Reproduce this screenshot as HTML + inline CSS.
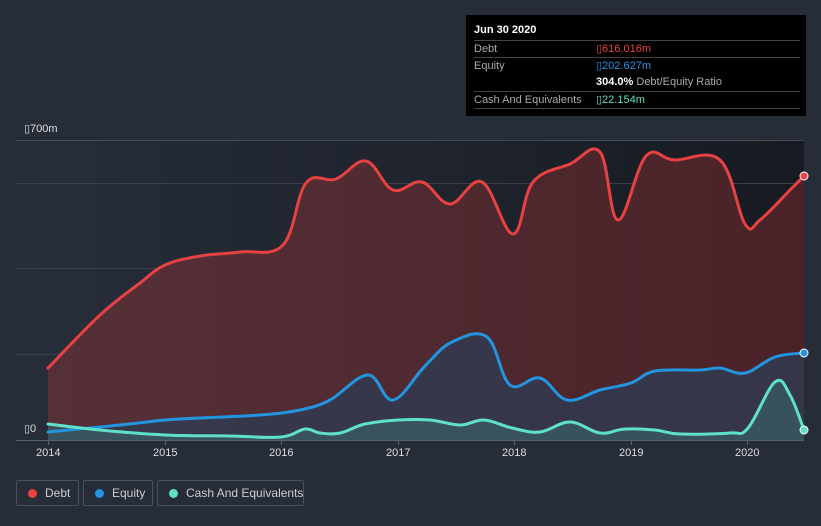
<!DOCTYPE html>
<html><head><meta charset="utf-8"><style>
html,body{margin:0;width:821px;height:526px;overflow:hidden}
body{background:#262d39;font-family:"Liberation Sans",sans-serif;position:relative}
.tt{position:absolute;left:466px;top:15px;width:340px;height:101px;background:#000;color:#fff;font-size:11px}
.tt .r{position:absolute;left:8px;right:6px;border-top:1px solid #444;height:17px;line-height:17px;color:#aaa}
.tt .v{position:absolute;left:122px}
.leg{position:absolute;top:480px;height:26px;border:1px solid #4a515c;border-radius:2px;color:#ccc;font-size:12px;line-height:25px;box-sizing:border-box;white-space:nowrap}
.leg i{position:absolute;left:11px;top:8px;width:9px;height:9px;border-radius:50%}
.ax{position:absolute;color:#ddd;font-size:11px}
</style></head><body>
<svg width="821" height="526" style="position:absolute;left:0;top:0">
<defs>
<linearGradient id="bg" x1="0" x2="1" y1="0" y2="0"><stop offset="0" stop-color="#272e3a"/><stop offset="1" stop-color="#171a21"/></linearGradient>
<linearGradient id="dg" x1="0" x2="1"><stop offset="0" stop-color="#553137"/><stop offset="1" stop-color="#4a2228"/></linearGradient>
</defs>
<rect x="16" y="140" width="788" height="300" fill="url(#bg)"/>
<g stroke-width="1"><line x1="16" x2="804" y1="140.5" y2="140.5" stroke="#454b57"/><line x1="16" x2="804" y1="183.5" y2="183.5" stroke="#3a3f4a"/><line x1="16" x2="804" y1="268.5" y2="268.5" stroke="#3a3f4a"/><line x1="16" x2="804" y1="354.5" y2="354.5" stroke="#3a3f4a"/></g>
<path id="df" fill="url(#dg)"/>
<path id="ef" fill="#323a50" opacity="0.85"/>
<path id="cf" fill="#3a5a60" opacity="0.8"/>
<g fill="none" stroke-width="3" stroke-linejoin="round" stroke-linecap="round">
<path id="dl" stroke="#e84142"/>
<path id="el" stroke="#2394df"/>
<path id="cl" stroke="#5fe0c8"/>
</g>
<circle cx="804" cy="176" r="4" fill="#e84142" stroke="#fff" stroke-width="1"/>
<circle cx="804" cy="353" r="4" fill="#2394df" stroke="#fff" stroke-width="1"/>
<circle cx="804" cy="430" r="4" fill="#5fe0c8" stroke="#fff" stroke-width="1"/>
<line x1="16" x2="804" y1="440.5" y2="440.5" stroke="#5a606b"/>
<g stroke="#5a606b"><line x1="48.5" x2="48.5" y1="440" y2="445"/><line x1="165.5" x2="165.5" y1="440" y2="445"/><line x1="281.5" x2="281.5" y1="440" y2="445"/><line x1="398.5" x2="398.5" y1="440" y2="445"/><line x1="514.5" x2="514.5" y1="440" y2="445"/><line x1="631.5" x2="631.5" y1="440" y2="445"/><line x1="747.5" x2="747.5" y1="440" y2="445"/></g>
</svg>
<div class="ax" style="left:24px;top:122px">▯700m</div>
<div class="ax" style="left:24px;top:422px">▯0</div>
<div class="ax" style="left:36px;top:447px">2014</div>
<div class="ax" style="left:153px;top:447px">2015</div>
<div class="ax" style="left:269px;top:447px">2016</div>
<div class="ax" style="left:386px;top:447px">2017</div>
<div class="ax" style="left:502px;top:447px">2018</div>
<div class="ax" style="left:619px;top:447px">2019</div>
<div class="ax" style="left:735px;top:447px">2020</div>
<div class="tt">
<div style="position:absolute;left:8px;top:9px;font-weight:bold">Jun 30 2020</div>
<div class="r" style="top:25px">Debt<span class="v" style="color:#e84142">▯616.016m</span></div>
<div class="r" style="top:42px">Equity<span class="v" style="color:#2394df">▯202.627m</span></div>
<div class="r" style="top:59px;border-top:none"><span class="v"><b style="color:#fff">304.0%</b> Debt/Equity Ratio</span></div>
<div class="r" style="top:76px">Cash And Equivalents<span class="v" style="color:#5fe0c8">▯22.154m</span></div>
<div class="r" style="top:93px;height:0"></div>
</div>
<div class="leg" style="left:16px;width:63px"><i style="background:#e84142"></i><span style="position:absolute;left:28px">Debt</span></div>
<div class="leg" style="left:83px;width:70px"><i style="background:#2394df"></i><span style="position:absolute;left:28px">Equity</span></div>
<div class="leg" style="left:157px;width:147px"><i style="background:#5fe0c8"></i><span style="position:absolute;left:28px">Cash And Equivalents</span></div>
<script>
function sm(p){var d="M"+p[0][0]+","+p[0][1];for(var i=0;i<p.length-1;i++){var a=p[i-1]||p[i],b=p[i],c=p[i+1],e=p[i+2]||c;var t=0.18;d+=" C"+(b[0]+(c[0]-a[0])*t).toFixed(1)+","+(b[1]+(c[1]-a[1])*t).toFixed(1)+" "+(c[0]-(e[0]-b[0])*t).toFixed(1)+","+(c[1]-(e[1]-b[1])*t).toFixed(1)+" "+c[0]+","+c[1];}return d;}
var D=[[48,368],[100,315],[140,283],[165,265],[200,256],[240,252],[283,245],[306,183],[336,179],[366,161],[393,190],[422,182],[450,204],[482,182],[513,234],[533,182],[570,164],[600,152],[618,220],[646,156],[674,160],[720,160],[745,224],[760,220],[790,190],[804,176]];
var E=[[48,432],[120,425],[165,420],[200,418],[260,415],[300,410],[330,400],[368,375],[393,400],[425,366],[452,342],[487,337],[510,385],[540,378],[567,400],[600,390],[631,383],[655,371],[700,370],[720,368],[745,373],[775,357],[804,353]];
var C=[[48,424],[100,430],[165,435],[230,436],[281,437],[305,429],[320,433],[340,433],[365,424],[398,420],[430,420],[460,425],[484,420],[512,428],[540,432],[570,422],[600,433],[625,429],[655,430],[680,434],[730,433],[748,428],[775,382],[790,395],[804,430]];
[["d",D],["e",E],["c",C]].forEach(function(x){var s=sm(x[1]);document.getElementById(x[0]+"l").setAttribute("d",s);document.getElementById(x[0]+"f").setAttribute("d",s+" L804,440 L48,440Z");});
</script>
</body></html>
